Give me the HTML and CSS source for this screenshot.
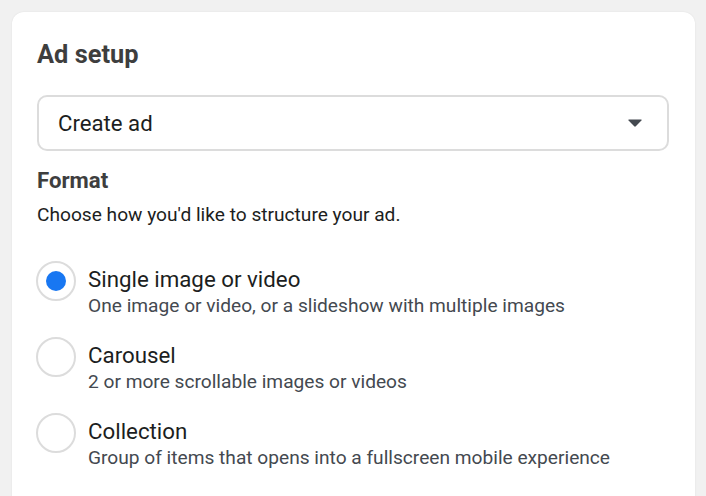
FILE: index.html
```html
<!DOCTYPE html>
<html>
<head>
<meta charset="utf-8">
<link rel="stylesheet" href="styles.css">
</head>
<body>
<div class="card">
  <h2 class="title">Ad setup</h2>
  <div class="select">
    <span class="select-text">Create ad</span>
    <svg class="caret" width="16" height="10" viewBox="0 0 16 10"><path d="M2 1.5 H14 Q15.2 1.5 14.4 2.4 L8.8 8.3 Q8 9.1 7.2 8.3 L1.6 2.4 Q0.8 1.5 2 1.5 Z" fill="#444950"/></svg>
  </div>
  <h3 class="section">Format</h3>
  <p class="hint">Choose how you'd like to structure your ad.</p>
  <div class="options">
    <div class="option">
      <span class="radio checked"></span>
      <div class="option-text">
        <div class="label">Single image or video</div>
        <div class="desc">One image or video, or a slideshow with multiple images</div>
      </div>
    </div>
    <div class="option">
      <span class="radio"></span>
      <div class="option-text">
        <div class="label">Carousel</div>
        <div class="desc">2 or more scrollable images or videos</div>
      </div>
    </div>
    <div class="option">
      <span class="radio"></span>
      <div class="option-text">
        <div class="label">Collection</div>
        <div class="desc">Group of items that opens into a fullscreen mobile experience</div>
      </div>
    </div>
  </div>
</div>
</body>
</html>
```
FILE: styles.css
```css
html, body {
  margin: 0;
  padding: 0;
}
body {
  background: #f1f1f1;
  font-family: Roboto, "Liberation Sans", Arial, sans-serif;
  padding: 12px 11px 0 12px;
  height: 496px;
  box-sizing: border-box;
  overflow: hidden;
}
.card {
  background: #fff;
  border-radius: 12px;
  box-shadow: 0 0 2px rgba(0,0,0,0.08);
  padding: 27px 26px 40px 25px;
  height: 600px;
}
.title {
  margin: 0;
  font-size: 25.4px;
  line-height: 30px;
  font-weight: 700;
  color: #3e3e3e;
}
.select {
  margin-top: 26px;
  height: 56px;
  box-sizing: border-box;
  border: 2px solid #dcdcdc;
  border-radius: 10px;
  display: flex;
  align-items: center;
  justify-content: space-between;
  padding: 0 24px 0 19px;
}
.select-text {
  font-size: 22.2px;
  color: #1c1e21;
}
.caret {
  display: block;
}
.section {
  margin: 16px 0 0;
  font-size: 22.2px;
  line-height: 26px;
  font-weight: 700;
  color: #3e3e3e;
}
.hint {
  margin: 10px 0 0;
  font-size: 19.15px;
  line-height: 24px;
  color: #1c1e21;
}
.options {
  margin-top: 34px;
  display: flex;
  flex-direction: column;
  gap: 19px;
}
.option {
  display: flex;
  align-items: flex-start;
  gap: 12px;
}
.radio {
  width: 40px;
  height: 40px;
  box-sizing: border-box;
  border: 2px solid #dcdcdc;
  border-radius: 50%;
  flex: none;
  display: flex;
  align-items: center;
  justify-content: center;
  margin-left: -1px;
}
.radio.checked::after {
  content: "";
  width: 20px;
  height: 20px;
  border-radius: 50%;
  background: #1877f2;
}
.option-text {
  padding-top: 5px;
}
.label {
  font-size: 22.3px;
  line-height: 26px;
  color: #1c1e21;
}
.desc {
  margin-top: 2px;
  font-size: 19.15px;
  line-height: 24px;
  color: #444950;
}
```
